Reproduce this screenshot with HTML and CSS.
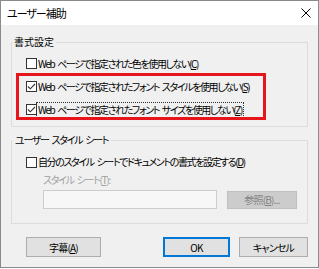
FILE: index.html
```html
<!DOCTYPE html>
<html lang="ja">

<head>
    <meta charset="UTF-8">
    <meta name="viewport" content="width=device-width, initial-scale=1.0">
    <title>ユーザー補助</title>
    <link rel="stylesheet" href="styles.css">
</head>

<body>

    <div class="janela">
        <div class="barra-titulo">
            <span class="titulo">ユーザー補助</span>
            <svg class="fechar" width="10" height="10" viewBox="0 0 10 10">
                <path d="M0.5 0.5 L9.5 9.5 M9.5 0.5 L0.5 9.5" stroke="#000" stroke-width="1" fill="none" />
            </svg>
        </div>

        <div class="conteudo">
            <fieldset class="grupo grupo-formato">
                <legend>書式設定</legend>

                <label class="opcao">
                    <span class="caixa"></span>
                    <span class="texto">Web ページで指定された色を使用しない(<u>C</u>)</span>
                </label>

                <div class="destaque">
                    <label class="opcao">
                        <span class="caixa">
                            <svg width="9" height="9" viewBox="0 0 9 9">
                                <path d="M1 4.5 L3.3 6.8 L8 2" stroke="#333" stroke-width="1.1" fill="none" />
                            </svg>
                        </span>
                        <span class="texto">Web ページで指定されたフォント スタイルを使用しない(<u>S</u>)</span>
                    </label>
                    <label class="opcao">
                        <span class="caixa">
                            <svg width="9" height="9" viewBox="0 0 9 9">
                                <path d="M1 4.5 L3.3 6.8 L8 2" stroke="#333" stroke-width="1.1" fill="none" />
                            </svg>
                        </span>
                        <span class="texto foco">Web ページで指定されたフォント サイズを使用しない(<u>Z</u>)</span>
                    </label>
                </div>
            </fieldset>

            <fieldset class="grupo grupo-usuario">
                <legend>ユーザー スタイル シート</legend>

                <label class="opcao">
                    <span class="caixa"></span>
                    <span class="texto">自分のスタイル シートでドキュメントの書式を設定する(<u>D</u>)</span>
                </label>

                <div class="folha">
                    <div class="folha-rotulo">スタイル シート(<u>T</u>):</div>
                    <div class="folha-linha">
                        <div class="folha-campo"></div>
                        <button class="botao botao-desativado" disabled>参照(<u>B</u>)...</button>
                    </div>
                </div>
            </fieldset>

            <div class="acoes">
                <button class="botao botao-legenda">字幕(<u>A</u>)</button>
                <button class="botao botao-ok">OK</button>
                <button class="botao botao-cancelar">キャンセル</button>
            </div>
        </div>
    </div>

</body>

</html>
```

FILE: styles.css
```css
* {
    margin: 0;
    padding: 0;
    box-sizing: border-box;
    font-family: "Noto Sans CJK JP", "Noto Sans", sans-serif;
}

body {
    background-color: #ffffff;
}

.janela {
    width: 319px;
    height: 268px;
    border: 1px solid #8a8a8a;
    background-color: #f0f0f0;
    display: flex;
    flex-direction: column;
}

.barra-titulo {
    height: 24px;
    background-color: #ffffff;
    display: flex;
    align-items: center;
    justify-content: space-between;
    padding: 0 7px 0 6px;
}

.titulo {
    font-size: 11px;
    letter-spacing: -1px;
    font-feature-settings: "palt";
    color: #000;
}

.conteudo {
    padding: 10px 10px 0 10px;
}

.grupo {
    border: 1px solid #dcdcdc;
    min-width: 0;
}

.grupo legend {
    font-size: 10px;
    line-height: 14px;
    padding: 0 2px;
    font-feature-settings: "palt";
    color: #000;
}

.grupo-usuario legend {
    letter-spacing: -1.3px;
    word-spacing: 2px;
    padding: 0 3px;
}

.grupo-formato {
    padding: 3px 0 5px 0;
}

.grupo-usuario {
    margin-top: 6px;
    padding: 4px 0 14px 0;
}

.opcao {
    display: flex;
    align-items: center;
    height: 23px;
    margin-left: 14px;
    font-size: 10px;
    color: #000;
}

.grupo-usuario .opcao {
    height: 22px;
}

.caixa {
    width: 11px;
    height: 11px;
    border: 1px solid #333;
    background-color: #fff;
    display: flex;
    align-items: center;
    justify-content: center;
    flex-shrink: 0;
}

.texto {
    padding: 0 1px;
    line-height: 14px;
    letter-spacing: -1.4px;
    word-spacing: 2px;
    font-feature-settings: "palt";
    white-space: nowrap;
}

.foco {
    outline: 1px dotted #333;
}

.destaque {
    position: relative;
}

.destaque::after {
    content: "";
    position: absolute;
    left: 4px;
    top: -2px;
    right: 41px;
    bottom: 1px;
    border: 3px solid #e8141c;
}

.folha {
    padding-left: 31px;
}

.folha-rotulo {
    font-size: 10px;
    line-height: 14px;
    letter-spacing: -1.3px;
    word-spacing: 2px;
    color: #a0a0a0;
    font-feature-settings: "palt";
    margin-bottom: 3px;
}

.folha-linha {
    display: flex;
    align-items: center;
    gap: 10px;
}

.folha-campo {
    width: 174px;
    height: 19px;
    border: 1px solid #cccccc;
    background-color: #f7f7f7;
}

.botao {
    height: 20px;
    border: 1px solid #adadad;
    background-color: #e1e1e1;
    font-size: 10px;
    letter-spacing: -0.8px;
    color: #000;
    font-feature-settings: "palt";
    display: flex;
    align-items: center;
    justify-content: center;
}

.botao-desativado {
    width: 70px;
    height: 18px;
    border-color: #bfbfbf;
    background-color: #cccccc;
    color: #838383;
}

.acoes {
    display: flex;
    margin-top: 13px;
    padding-left: 15px;
}

.botao-legenda {
    width: 75px;
}

.botao-ok {
    width: 67px;
    margin-left: auto;
    border: 2px solid #0078d7;
}

.botao-cancelar {
    width: 69px;
    margin-left: 9px;
}
```
